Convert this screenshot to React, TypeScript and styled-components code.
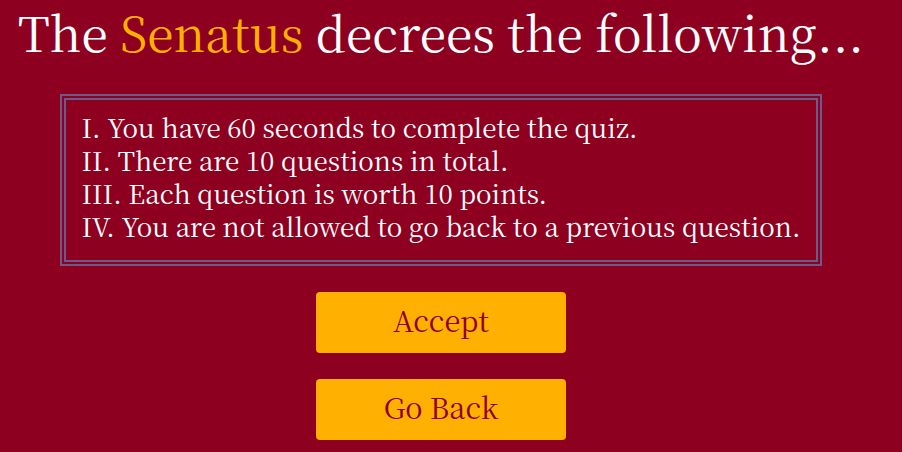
import React from "react";
import styled, { createGlobalStyle } from "styled-components";

const GlobalStyle = createGlobalStyle`
  html, body {
    margin: 0;
    padding: 0;
    background: #8e0020;
  }
  body {
    font-family: "Noto Serif CJK SC", "Noto Serif CJK JP", serif;
  }
`;

const serif = `"Noto Serif CJK SC", "Noto Serif CJK JP", "DejaVu Serif", serif`;

const Page = styled.main`
  width: 882px;
  display: flex;
  flex-direction: column;
  align-items: center;
  padding-top: 4px;
  font-family: ${serif};
`;

const Title = styled.h1`
  margin: 0;
  font-size: 48px;
  line-height: 56px;
  font-weight: 400;
  color: #ffffff;
  white-space: nowrap;
`;

const Highlight = styled.span`
  color: #ffb000;
`;

const Decree = styled.ol`
  list-style: none;
  margin: 34px 0 0;
  padding: 10px 16px 18px;
  border: 6px double #6b5a8c;
  width: fit-content;
`;

const Rule = styled.li`
  font-size: 26px;
  line-height: 33px;
  color: #ffffff;
  white-space: nowrap;
`;

const Actions = styled.div`
  display: flex;
  flex-direction: column;
  gap: 26px;
  margin-top: 26px;
`;

const Button = styled.button`
  width: 250px;
  height: 61px;
  border: none;
  border-radius: 4px;
  background: #ffb000;
  color: #8e0020;
  font-family: ${serif};
  font-size: 29px;
  display: flex;
  align-items: center;
  justify-content: center;
  cursor: pointer;
  padding: 0 0 6px;
`;

const rules = [
  "I. You have 60 seconds to complete the quiz.",
  "II. There are 10 questions in total.",
  "III. Each question is worth 10 points.",
  "IV. You are not allowed to go back to a previous question.",
];

export default function App() {
  return (
    <>
      <GlobalStyle />
      <Page>
        <Title>
          The <Highlight>Senatus</Highlight> decrees the following...
        </Title>
        <Decree>
          {rules.map((r) => (
            <Rule key={r}>{r}</Rule>
          ))}
        </Decree>
        <Actions>
          <Button>Accept</Button>
          <Button>Go Back</Button>
        </Actions>
      </Page>
    </>
  );
}
